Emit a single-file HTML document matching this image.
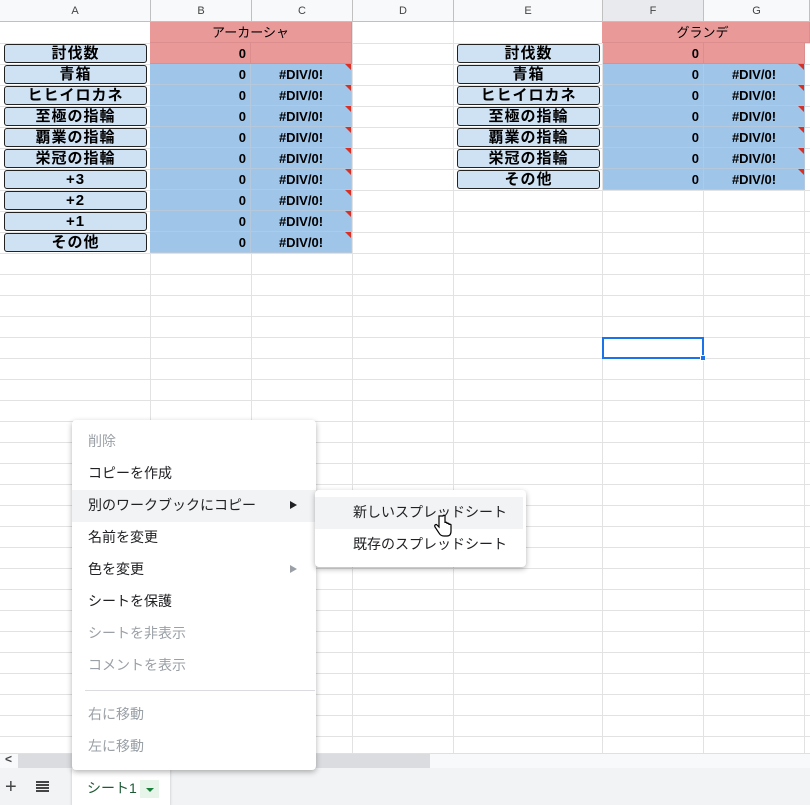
<!DOCTYPE html>
<html><head><meta charset="utf-8"><style>
body{margin:0;width:810px;height:805px;overflow:hidden;position:relative;background:#fff;font-family:"Liberation Sans","Noto Sans CJK JP",sans-serif}
.a{position:absolute;box-sizing:border-box}
.hd{top:0;height:22px;background:#f8f9fa;border-right:1px solid #c0c0c0;border-bottom:1px solid #c0c0c0;font-size:11px;color:#444;text-align:center;line-height:22px}
.vl{top:22px;height:731px;width:1px;background:#e2e2e2}
.hl{left:0;width:810px;height:1px;background:#e2e2e2}
.c{height:21px;font-size:13px;line-height:21px;font-weight:bold;color:#000;border-right:1px solid #b6c8dc;border-bottom:1px solid #b6c8dc}
.red{background:#ea9999;border-color:#dc8e8e}
.blu{background:#9fc5e8}
.lab{height:19px;background:#cfe2f3;border:1px solid #222;border-radius:3px;text-align:center;font-size:15px;font-weight:bold;line-height:18px;letter-spacing:1px}
.tri{width:0;height:0;border-top:6px solid #d93025;border-left:6px solid transparent}
.mi{left:88px;font-size:14px;color:#202124;line-height:20px}
.dis{color:#9aa0a6}
</style></head><body>
<div class="a hd" style="left:0;width:151px">A</div>
<div class="a hd" style="left:151px;width:101px">B</div>
<div class="a hd" style="left:252px;width:101px">C</div>
<div class="a hd" style="left:353px;width:101px">D</div>
<div class="a hd" style="left:454px;width:149px">E</div>
<div class="a hd" style="left:603px;width:101px;background:#e8eaed">F</div>
<div class="a hd" style="left:704px;width:106px">G</div>
<div id="g"></div>
<script>
var g=document.getElementById('g'),h='';
[150,251,352,453,602,703,804].forEach(function(x){h+='<div class="a vl" style="left:'+x+'px"></div>'});
for(var y=43;y<753;y+=21)h+='<div class="a hl" style="top:'+y+'px"></div>';
function cells(x0,labels){
 h+='<div class="a c red" style="left:'+(x0+150)+'px;top:43px;width:202px"></div>';
 h+='<div class="a c red" style="left:'+(x0+150)+'px;top:43px;width:101px;text-align:right;padding-right:4px">0</div>';
 labels.forEach(function(t,i){var y=64+i*21;
  h+='<div class="a c blu" style="left:'+(x0+150)+'px;top:'+y+'px;width:101px;text-align:right;padding-right:4px">0</div>';
  h+='<div class="a c blu" style="left:'+(x0+251)+'px;top:'+y+'px;width:101px;text-align:center;font-size:13px">#DIV/0!</div>';
  h+='<div class="a tri" style="left:'+(x0+345)+'px;top:'+y+'px"></div>';
 });
 ['討伐数'].concat(labels).forEach(function(t,i){h+='<div class="a lab" style="left:'+(x0+4)+'px;top:'+(44+i*21)+'px;width:143px">'+t+'</div>'});
}
cells(0,['青箱','ヒヒイロカネ','至極の指輪','覇業の指輪','栄冠の指輪','+3','+2','+1','その他']);
cells(453,['青箱','ヒヒイロカネ','至極の指輪','覇業の指輪','栄冠の指輪','その他']);
g.innerHTML=h;
</script>
<div class="a c red" style="left:150px;top:22px;width:202px;text-align:center;font-weight:normal;font-size:13px">アーカーシャ</div>
<div class="a c red" style="left:602px;top:22px;width:208px;text-align:center;font-weight:normal;font-size:13px;padding-right:6px">グランデ</div>
<div class="a" style="left:602px;top:337px;width:102px;height:22px;border:2px solid #1a73e8"></div>
<div class="a" style="left:700px;top:355px;width:6px;height:6px;background:#1a73e8;border:1px solid #fff"></div>
<div class="a" style="left:0;top:753px;width:810px;height:15px;background:#f8f9fa;border-top:1px solid #e0e0e0"></div>
<div class="a" style="left:18px;top:754px;width:412px;height:14px;background:#dadce0"></div>
<div class="a" style="left:5px;top:752px;font-size:12px;color:#444;font-weight:bold">&lt;</div>
<div class="a" style="left:0;top:768px;width:810px;height:37px;background:#f1f3f4"></div>
<div class="a" style="left:5px;top:776px;font-size:20px;color:#444">+</div>
<div class="a" style="left:36px;top:784px;width:13px;height:2px;background:#444;box-shadow:0 3px #444,0 6px #444,0 -3px #444"></div>
<div class="a" style="left:72px;top:768px;width:98px;height:37px;background:#fff;box-shadow:0 1px 3px rgba(0,0,0,.2)"></div>
<div class="a" style="left:87px;top:778px;font-size:14px;color:#1e5a36">シート1</div>
<div class="a" style="left:140px;top:780px;width:19px;height:18px;background:#e6f4ea"></div>
<div class="a" style="left:146px;top:788px;border-top:4px solid #188038;border-left:4px solid transparent;border-right:4px solid transparent"></div>
<div class="a" style="left:72px;top:420px;width:244px;height:350px;background:#fff;border-radius:4px;box-shadow:0 2px 6px rgba(0,0,0,.3)"></div>
<div class="a" style="left:72px;top:490px;width:244px;height:32px;background:#f1f3f4"></div>
<div class="a mi dis" style="top:431px">削除</div>
<div class="a mi" style="top:463px">コピーを作成</div>
<div class="a mi" style="top:495px">別のワークブックにコピー</div>
<div class="a" style="left:290px;top:501px;border-left:7px solid #202124;border-top:4px solid transparent;border-bottom:4px solid transparent"></div>
<div class="a mi" style="top:527px">名前を変更</div>
<div class="a mi" style="top:559px">色を変更</div>
<div class="a" style="left:290px;top:565px;border-left:7px solid #9aa0a6;border-top:4px solid transparent;border-bottom:4px solid transparent"></div>
<div class="a mi" style="top:591px">シートを保護</div>
<div class="a mi dis" style="top:623px">シートを非表示</div>
<div class="a mi dis" style="top:655px">コメントを表示</div>
<div class="a" style="left:85px;top:690px;width:230px;height:1px;background:#dadce0"></div>
<div class="a mi dis" style="top:704px">右に移動</div>
<div class="a mi dis" style="top:736px">左に移動</div>
<div class="a" style="left:315px;top:490px;width:211px;height:77px;background:#fff;border-radius:4px;box-shadow:0 2px 6px rgba(0,0,0,.3)"></div>
<div class="a" style="left:315px;top:497px;width:208px;height:32px;background:#f1f3f4"></div>
<div class="a mi" style="left:353px;top:502px">新しいスプレッドシート</div>
<div class="a mi" style="left:353px;top:534px">既存のスプレッドシート</div>
<svg class="a" style="left:434px;top:514px" width="20" height="24" viewBox="0 0 20 24"><path d="M5 2v11l-2-2c-1-1-3 0-2 2l4 6c1 2 3 3 5 3h3c3 0 4-2 4-5v-6c0-1-2-1-2 0v-1c0-1-2-1-2 0v-1c0-1-2-1-2 0V2c0-1-2-1-2 0z" fill="#fff" stroke="#000" stroke-width="1.2"/></svg>
</body></html>
